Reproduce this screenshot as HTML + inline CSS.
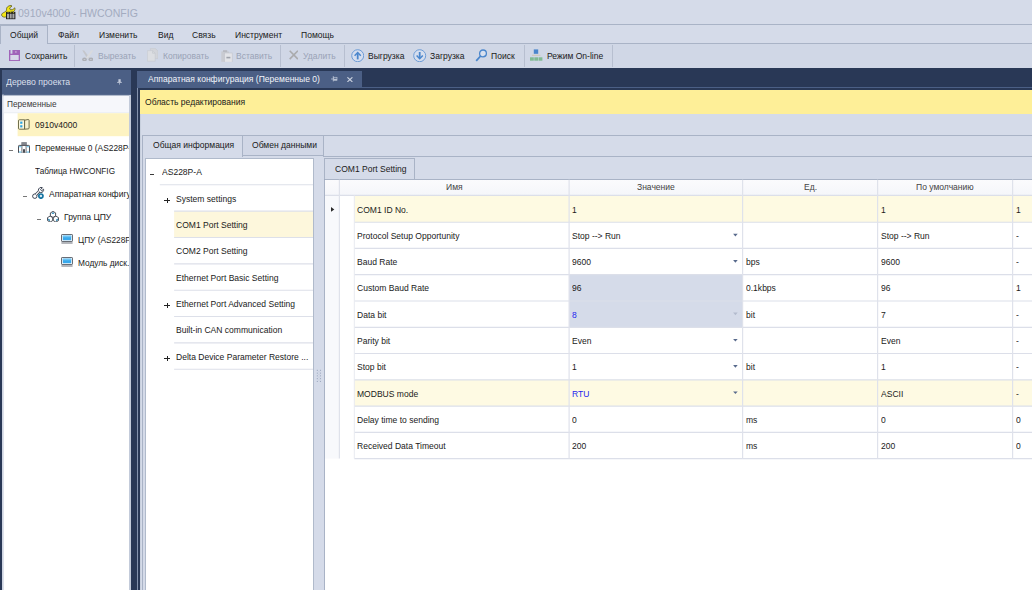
<!DOCTYPE html>
<html>
<head>
<meta charset="utf-8">
<title>0910v4000 - HWCONFIG</title>
<style>
html,body{margin:0;padding:0;}
body{width:1032px;height:590px;overflow:hidden;background:#d5dbe9;position:relative;
 font-family:"Liberation Sans",sans-serif;font-size:9.4px;color:#1a1a1a;}
div,span{box-sizing:border-box;}
.a{position:absolute;}
.t{position:absolute;white-space:nowrap;line-height:12px;height:12px;transform-origin:0 50%;transform:scaleX(.91);}
.g{color:#9aa3b6;}
.hl{position:absolute;height:1px;background:#a9b3c6;}
.vl{position:absolute;width:1px;background:#a9b3c6;}
.sep{position:absolute;width:1.2px;top:45px;height:21.5px;background:#b7bfd0;}
.tl{position:absolute;height:1px;left:174px;width:139px;background:#dfe2ea;}
.tl0{left:159.5px;width:153.5px;}
.row{position:absolute;left:354px;width:678px;height:26.3px;background:#fff;}
.gh{position:absolute;height:1px;left:354px;width:678px;background:#d4d7e1;}
.gv{position:absolute;width:1px;top:179.5px;height:279px;background:#d4d7e1;}
.dd{position:absolute;left:733px;width:0;height:0;border-left:2.4px solid transparent;border-right:2.4px solid transparent;border-top:2.7px solid #4d5f82;}
.mi{position:absolute;width:4px;height:1px;background:#3a3a3a;}
.mg{background:#777;}
.pl{position:absolute;width:6px;height:5.4px;background:linear-gradient(#222,#222) 0 2.2px/6px 1px no-repeat,linear-gradient(#222,#222) 2.5px 0/1px 5.4px no-repeat;}
</style>
</head>
<body>

<!-- ===== title bar ===== -->
<svg class="a" style="left:1px;top:5px" width="15" height="15" viewBox="0 0 15 15">
 <path d="M.6 10.2 C.2 8.6 2.2 7.6 3.6 7.2 L5.6 5.2 C5 2.6 7 .6 10 .5 L11 1 L8.6 3 L9.4 4.8 L11.8 4.6 L13.8 2.8 C14.6 5.2 12.8 7.4 10.2 7.2 L6.4 10.6 C5.4 12.6 1.4 12.8 .6 10.2 Z" fill="#f3e616" stroke="#4a4a18" stroke-width=".7"/>
 <rect x="5" y="6.8" width="9.4" height="7.4" fill="#222"/>
 <rect x="6" y="8.8" width="2" height="4.6" fill="#a8a8a8"/>
 <rect x="8.7" y="8.8" width="2" height="4.6" fill="#a8a8a8"/>
 <rect x="11.4" y="8.8" width="2" height="4.6" fill="#a8a8a8"/>
 <rect x="6.6" y="7.3" width=".9" height=".8" fill="#e8dc20"/><rect x="9.3" y="7.3" width=".9" height=".8" fill="#e8dc20"/><rect x="12" y="7.3" width=".9" height=".8" fill="#e8dc20"/>
</svg>
<div class="t" style="left:18px;top:6.5px;font-size:11.2px;color:#a3abc0;transform:scaleX(.94)">0910v4000 - HWCONFIG</div>
<div class="hl" style="left:0;top:24px;width:1032px"></div>

<!-- ===== menu tabs ===== -->
<div class="a" style="left:0;top:44px;width:1032px;height:24px;background:#d0d7e6"></div>
<div class="a" style="left:0;top:25px;width:48px;height:19px;border:1px solid #a9b3c6;border-bottom:none;background:#d0d7e6"></div>
<div class="hl" style="left:47px;top:43px;width:985px"></div>
<div class="t" style="left:10px;top:28.5px">Общий</div>
<div class="t" style="left:58px;top:28.5px">Файл</div>
<div class="t" style="left:99px;top:28.5px">Изменить</div>
<div class="t" style="left:157.5px;top:28.5px">Вид</div>
<div class="t" style="left:191.5px;top:28.5px">Связь</div>
<div class="t" style="left:235px;top:28.5px">Инструмент</div>
<div class="t" style="left:301px;top:28.5px">Помощь</div>

<!-- ===== toolbar ===== -->
<div id="toolbar">
<!-- save -->
<svg class="a" style="left:8.9px;top:49.8px" width="11" height="11.2" viewBox="0 0 11 11.2">
 <rect x=".5" y=".5" width="10" height="10.2" fill="#a064b9" stroke="#a064b9" stroke-width="1"/>
 <rect x="1.5" y="0" width="1.9" height="3.7" fill="#d0d7e6"/>
 <rect x="6.3" y="1.1" width="1.2" height="1.7" fill="#cdb4da"/>
 <rect x="1.3" y="5" width="8.4" height="5" fill="#d7d8e9"/>
</svg>
<div class="t" style="left:24.5px;top:49.5px">Сохранить</div>
<div class="sep" style="left:74px"></div>
<!-- cut -->
<svg class="a" style="left:81.8px;top:49.8px" width="11.4" height="11.4" viewBox="0 0 11.4 11.4">
 <path d="M.2 .2 L2.2 .6 L7.8 8 L5.4 8.8 Z" fill="#c4c6cb"/>
 <path d="M11.2 .2 L9.2 .6 L3.6 8 L6 8.8 Z" fill="#d9dadd"/>
 <ellipse cx="2.5" cy="9.4" rx="2.4" ry="1.8" fill="#adafb5"/>
 <ellipse cx="8.9" cy="9.4" rx="2.4" ry="1.8" fill="#adafb5"/>
 <ellipse cx="2.5" cy="9.5" rx="1" ry=".6" fill="#c9ccd4"/>
 <ellipse cx="8.9" cy="9.5" rx="1" ry=".6" fill="#c9ccd4"/>
</svg>
<div class="t g" style="left:97.5px;top:49.5px">Вырезать</div>
<!-- copy -->
<svg class="a" style="left:147px;top:48.2px" width="11.4" height="13.6" viewBox="0 0 11.4 13.6">
 <path d="M3.4 .4 H8.4 L11 3 V10.6 H3.4 Z" fill="#d3d5da" stroke="#c6c9d0" stroke-width=".6"/>
 <path d="M.4 2.6 H5.6 L8.2 5.2 V13.2 H.4 Z" fill="#dcdee2" stroke="#c6c9d0" stroke-width=".6"/>
 <path d="M5.6 2.6 V5.2 H8.2" fill="none" stroke="#c0c3ca" stroke-width=".6"/>
</svg>
<div class="t g" style="left:162.5px;top:49.5px">Копировать</div>
<!-- paste -->
<svg class="a" style="left:221.4px;top:49.6px" width="11.6" height="12.6" viewBox="0 0 11.6 12.6">
 <rect x=".3" y="1.4" width="7.6" height="10.4" fill="#c9cbd1"/>
 <rect x="2" y=".2" width="4.2" height="1.8" fill="#b8bac1"/>
 <rect x="3.6" y="3" width="7.6" height="9.2" fill="#e3e4e8" stroke="#c2c4cb" stroke-width=".6"/>
 <rect x="5.4" y="6.8" width="4" height="1.6" fill="#9fa2ab"/>
</svg>
<div class="t g" style="left:236px;top:49.5px">Вставить</div>
<div class="sep" style="left:280px"></div>
<!-- delete -->
<svg class="a" style="left:288.5px;top:49.9px" width="9.6" height="9.8" viewBox="0 0 9.6 9.8">
 <path d="M.7 .7 L8.9 9.1 M8.9 .7 L.7 9.1" stroke="#aaabad" stroke-width="1.6" fill="none"/>
</svg>
<div class="t g" style="left:303px;top:49.5px">Удалить</div>
<div class="sep" style="left:343.5px"></div>
<!-- upload -->
<svg class="a" style="left:350.6px;top:48.6px" width="13.4" height="13.4" viewBox="0 0 13.4 13.4">
 <circle cx="6.7" cy="6.7" r="6" fill="#d6deee" stroke="#6c9cd6" stroke-width="1"/>
 <path d="M6.7 10.4 V4.2" fill="none" stroke="#4a86cc" stroke-width="1.8"/>
 <path d="M3.6 6.8 L6.7 3.6 L9.8 6.8" fill="none" stroke="#4a86cc" stroke-width="1.5"/>
</svg>
<div class="t" style="left:367.5px;top:49.5px">Выгрузка</div>
<!-- download -->
<svg class="a" style="left:413.2px;top:48.6px" width="13.4" height="13.4" viewBox="0 0 13.4 13.4">
 <circle cx="6.7" cy="6.7" r="6" fill="#d6deee" stroke="#6c9cd6" stroke-width="1"/>
 <path d="M6.7 3 V9.2" fill="none" stroke="#4a86cc" stroke-width="1.8"/>
 <path d="M3.6 6.6 L6.7 9.8 L9.8 6.6" fill="none" stroke="#4a86cc" stroke-width="1.5"/>
</svg>
<div class="t" style="left:430px;top:49.5px">Загрузка</div>
<!-- search -->
<svg class="a" style="left:475px;top:48.5px" width="13" height="13" viewBox="0 0 13 13">
 <circle cx="8" cy="4.4" r="3.4" fill="#d8e0ef" stroke="#4a86cc" stroke-width="1.3"/>
 <path d="M5.6 7 L1.2 11.8" stroke="#4a86cc" stroke-width="1.8" fill="none"/>
</svg>
<div class="t" style="left:491px;top:49.5px">Поиск</div>
<div class="sep" style="left:523.5px"></div>
<!-- online -->
<svg class="a" style="left:530px;top:49px" width="12.6" height="12" viewBox="0 0 12.6 12">
 <rect x="3.8" y=".4" width="4.4" height="4.4" fill="#4a86cc"/>
 <path d="M2 6.3 H10.4" stroke="#cdbf9f" stroke-width=".7" fill="none"/>
 <rect x="0" y="8.3" width="3.8" height="3.4" fill="#7fba93"/>
 <rect x="4.3" y="8.3" width="3.8" height="3.4" fill="#7fba93"/>
 <rect x="8.6" y="8.3" width="3.8" height="3.4" fill="#7fba93"/>
</svg>
<div class="t" style="left:546.5px;top:49.5px">Режим On-line</div>
<div class="sep" style="left:611.5px"></div>
</div>

<!-- ===== dark workspace ===== -->
<div class="a" style="left:0;top:67.7px;width:1032px;height:523px;background:#293856"></div>

<!-- left panel -->
<div class="a" style="left:2px;top:70px;width:129px;height:25px;background:#4b5f85"></div>
<div class="t" style="left:6px;top:76px;color:#d9dfeb;transform:scaleX(.93)">Дерево проекта</div>
<svg class="a" style="left:117px;top:79.3px" width="5" height="5.6" viewBox="0 0 5 5.6">
 <path d="M1.4 .2 H3.7 V3 H1.4 Z" fill="#c3cbdb"/><path d="M.2 3.4 H4.8" stroke="#d5dbe7" stroke-width=".8"/><path d="M2.5 3.6 V5.6" stroke="#c3cbdb" stroke-width=".7"/>
</svg>
<div class="a" style="left:2px;top:94.6px;width:129px;height:496px;background:#bfc7d7"></div><svg class="a" style="left:0;top:0" width="140" height="590"><rect x="2.2" y="94.6" width="1.6" height="496" fill="#d3d9e5"/><rect x="2.2" y="94.9" width="128.8" height="1.3" fill="#b3bccd"/><rect x="3.7" y="96.1" width="125.5" height="495" fill="#fff"/><rect x="3.7" y="96.1" width="125.5" height="16.6" fill="#f6f7fb"/><rect x="3.7" y="112.4" width="125.5" height=".8" fill="#e6e9f0"/><rect x="17.6" y="113.2" width="111.4" height="23" fill="#fdf3c2"/></svg>
<div class="t" style="left:7px;top:98px;color:#3a3a3a;transform:scaleX(.88)">Переменные</div>
<div id="ltree">
<!-- icons -->
<svg class="a" style="left:18.2px;top:118.6px" width="11.6" height="11" viewBox="0 0 11.6 11">
 <path d="M.5 1.6 Q.5 .8 1.3 .8 H6.6 V10.2 H1.3 Q.5 10.2 .5 9.4 Z" fill="#fbf8e0" stroke="#5e5d3c" stroke-width=".9"/>
 <path d="M6.6 1.2 L10.2 .5 Q11.1 .5 11.1 1.4 V9 Q11.1 9.8 10.2 9.9 L6.6 10.2 Z" fill="#f6f1cf" stroke="#5e5d3c" stroke-width=".9"/>
 <rect x="2.2" y="2.6" width="2.2" height="2.2" fill="#2ea3e0"/>
 <rect x="2.2" y="6.2" width="2.2" height="2.2" fill="#2ea3e0"/>
</svg>
<div class="t" style="left:34.5px;top:119px">0910v4000</div>

<div class="mi mg" style="left:8.5px;top:149.5px"></div>
<svg class="a" style="left:18px;top:141.5px" width="12" height="11.8" viewBox="0 0 12 11.8">
 <rect x="3.4" y=".2" width="5.4" height="3.2" fill="#6a6d74"/>
 <path d="M3.4 1.2 H8.8 M3.4 2.3 H8.8" stroke="#aeb1b8" stroke-width=".5"/>
 <rect x=".5" y="3.4" width="11" height="7.9" rx=".8" fill="#fff" stroke="#4b4e55" stroke-width="1"/>
 <path d="M3.9 3.4 V11.3 M8.1 3.4 V11.3" stroke="#5b5e66" stroke-width=".9"/>
 <rect x="1" y="4" width="2.4" height="1.3" fill="#7ccbee"/><rect x="8.6" y="4" width="2.4" height="1.3" fill="#7ccbee"/>
 <rect x="1" y="9.4" width="2.4" height="1.3" fill="#7ccbee"/><rect x="8.6" y="9.4" width="2.4" height="1.3" fill="#7ccbee"/>
 <rect x="5" y="7.2" width="2" height="3.6" fill="#4b4e55"/>
</svg>
<div class="t" style="left:34.5px;top:142px;transform:scaleX(.895)">Переменные 0 (AS228P-A)</div>

<div class="t" style="left:34.5px;top:164.5px;transform:scaleX(.875)">Таблица HWCONFIG</div>

<div class="mi mg" style="left:22.5px;top:195.5px"></div>
<svg class="a" style="left:32.4px;top:187px" width="12.6" height="12.4" viewBox="0 0 12.6 12.4">
 <path d="M3.6 8 L7.4 4.2" stroke="#3c4454" stroke-width="3" fill="none"/>
 <circle cx="2.8" cy="9.2" r="2.2" fill="#fff" stroke="#3c4454" stroke-width="1"/>
 <path d="M6.4 3.4 A2.8 2.8 0 0 1 10.4 .7 L8.6 2.6 L9.6 3.8 L11.6 2.2 A2.8 2.8 0 0 1 8.6 5.6 Z" fill="#fff" stroke="#3c4454" stroke-width="1"/>
 <path d="M3.8 7.8 L7.4 4.2" stroke="#fff" stroke-width="1.2" fill="none"/>
 <circle cx="8.9" cy="9.1" r="2.1" fill="#d6e6ef" stroke="#1272a0" stroke-width="1.7"/>
</svg>
<div class="t" style="left:49px;top:187.5px">Аппаратная конфигурация</div>

<div class="mi mg" style="left:37px;top:218.5px"></div>
<svg class="a" style="left:46.5px;top:210.6px" width="12" height="11.6" viewBox="0 0 12 11.6">
 <path d="M3.1 5.1 L5.7 6.6 V9.6 L3.1 11.1 L.5 9.6 V6.6 Z" fill="#fff" stroke="#3a3f4a" stroke-width=".9"/>
 <path d="M8.9 5.1 L11.5 6.6 V9.6 L8.9 11.1 L6.3 9.6 V6.6 Z" fill="#fff" stroke="#3a3f4a" stroke-width=".9"/>
 <path d="M6 .4 L8.6 1.9 V4.9 L6 6.4 L3.4 4.9 V1.9 Z" fill="#fff" stroke="#3a3f4a" stroke-width=".9"/>
 <path d="M6 1.3 L7.5 2.2 L6 3.1 L4.5 2.2 Z" fill="#147cae"/>
 <path d="M1.2 7.4 L2.8 8.4 V10.2 L1.2 9.2 Z" fill="#147cae"/>
 <path d="M10.8 7.4 L9.2 8.4 V10.2 L10.8 9.2 Z" fill="#147cae"/>
</svg>
<div class="t" style="left:63.5px;top:211px">Группа ЦПУ</div>

<svg class="a" style="left:61px;top:234.3px" width="12" height="9.6" viewBox="0 0 12 9.6">
 <rect x=".5" y=".5" width="11" height="7" rx=".6" fill="#f4f8fb" stroke="#555a64" stroke-width=".9"/>
 <rect x="1.8" y="1.7" width="8.4" height="4.5" fill="#38a9ec"/>
 <rect x="1.8" y="1.7" width="8.4" height="1.6" fill="#6cc4f4"/>
 <path d="M.4 9 H11.6" stroke="#6a6e78" stroke-width="1"/>
</svg>
<div class="t" style="left:77.5px;top:234px;transform:scaleX(.885)">ЦПУ (AS228P-A)</div>

<svg class="a" style="left:61px;top:257.2px" width="12" height="9.6" viewBox="0 0 12 9.6">
 <rect x=".5" y=".5" width="11" height="7" rx=".6" fill="#f4f8fb" stroke="#555a64" stroke-width=".9"/>
 <rect x="1.8" y="1.7" width="8.4" height="4.5" fill="#38a9ec"/>
 <rect x="1.8" y="1.7" width="8.4" height="1.6" fill="#6cc4f4"/>
 <path d="M.4 9 H11.6" stroke="#6a6e78" stroke-width="1"/>
</svg>
<div class="t" style="left:77.5px;top:256.5px;transform:scaleX(.885)">Модуль диск. ввода</div>
</div>
<!-- clip of left tree text -->
<div class="a" style="left:129px;top:94.6px;width:2px;height:496px;background:#c3cbda"></div>
<div class="a" style="left:131px;top:68px;width:9px;height:522px;background:#293856"></div>
<div class="a" style="left:137.2px;top:88.2px;width:.7px;height:502px;background:#8492ad"></div>

<!-- document tab -->
<div class="a" style="left:137.2px;top:71px;width:225.3px;height:17.2px;background:#4b5f85"></div>
<div class="t" style="left:147.5px;top:73px;color:#f2f5fa">Аппаратная конфигурация (Переменные 0)</div>
<svg class="a" style="left:331px;top:76.4px" width="6.6" height="5.6" viewBox="0 0 6.6 5.6">
 <path d="M2.3 .2 V5.4" stroke="#b9c2d4" stroke-width=".9"/>
 <path d="M0 3 H2.3" stroke="#b9c2d4" stroke-width=".8"/>
 <rect x="2.7" y="1.3" width="3.3" height="2.9" fill="none" stroke="#b9c2d4" stroke-width=".7"/>
 <rect x="2.7" y="2.8" width="3.3" height="1.6" fill="#b9c2d4"/>
</svg>
<svg class="a" style="left:347.2px;top:76.8px" width="5.8" height="5.2" viewBox="0 0 5.8 5.2">
 <path d="M.4 .3 L5.4 4.9 M5.4 .3 L.4 4.9" stroke="#ccd3e0" stroke-width="1.1" fill="none"/>
</svg>
<div class="a" style="left:137.2px;top:87px;width:895px;height:1.2px;background:#4b5f85"></div>

<!-- content -->
<div class="a" style="left:139.8px;top:89.8px;width:893px;height:501px;background:#d5dbe9"></div>
<div class="a" style="left:139.8px;top:89.8px;width:893px;height:24.2px;background:#feef98"></div>
<div class="t" style="left:144.5px;top:96px">Область редактирования</div>

<!-- outer tab control -->
<div class="hl" style="left:242px;top:135px;width:790px"></div>
<div class="a" style="left:142px;top:135px;width:100.5px;height:22px;border:1px solid #a9b3c6;border-bottom:none;background:#d5dbe9"></div>
<div class="a" style="left:242.5px;top:135px;width:81px;height:21px;border:1px solid #a9b3c6;border-left:none;background:#d1d7e6"></div>
<div class="hl" style="left:323px;top:156px;width:709px"></div>
<div class="vl" style="left:141.7px;top:156px;height:434px"></div><div class="a" style="left:139.8px;top:114px;width:1.2px;height:476px;background:#c8d0de"></div>
<div class="t" style="left:152.5px;top:139px">Общая информация</div>
<div class="t" style="left:251.5px;top:139px">Обмен данными</div>

<!-- nav tree -->
<div class="a" style="left:145px;top:158.4px;width:168.8px;height:432px;background:#fff;border:.8px solid #b0bacb;border-bottom:none"></div>
<svg class="a" style="left:0;top:0" width="1032" height="590">
 <rect x="174.1" y="211.15" width="138.9" height="26.35" fill="#fdf7dc"/>
 <path d="M159.8 184.80 H313" stroke="#dde0e9" stroke-width="1.1"/>
 <path d="M174.1 211.15 H313 M174.1 237.50 H313 M174.1 263.85 H313 M174.1 290.20 H313 M174.1 316.55 H313 M174.1 342.90 H313 M174.1 369.25 H313" stroke="#dde0e9" stroke-width="1.1"/>
</svg>
<div class="mi" style="left:150.3px;top:174px"></div>
<div class="t" style="left:162px;top:165.75px">AS228P-A</div>
<div class="pl" style="left:164px;top:197.75px"></div>
<div class="t" style="left:176px;top:192.75px">System settings</div>
<div class="t" style="left:176px;top:218.75px">COM1 Port Setting</div>
<div class="t" style="left:176px;top:244.75px">COM2 Port Setting</div>
<div class="t" style="left:176px;top:271.75px">Ethernet Port Basic Setting</div>
<div class="pl" style="left:164px;top:303.10px"></div>
<div class="t" style="left:176px;top:297.75px">Ethernet Port Advanced Setting</div>
<div class="t" style="left:176px;top:323.75px">Built-in CAN communication</div>
<div class="pl" style="left:164px;top:355.90px"></div>
<div class="t" style="left:176px;top:350.75px">Delta Device Parameter Restore ...</div>

<!-- splitter -->
<svg class="a" style="left:0;top:0" width="1032" height="590">
 <rect x="316.8" y="369.8" width="1.1" height="1.1" fill="#a0abc1"/>
 <rect x="319.9" y="369.8" width="1.1" height="1.1" fill="#a0abc1"/>
 <rect x="316.8" y="372.6" width="1.1" height="1.1" fill="#a0abc1"/>
 <rect x="319.9" y="372.6" width="1.1" height="1.1" fill="#a0abc1"/>
 <rect x="316.8" y="375.3" width="1.1" height="1.1" fill="#a0abc1"/>
 <rect x="319.9" y="375.3" width="1.1" height="1.1" fill="#a0abc1"/>
 <rect x="316.8" y="378.1" width="1.1" height="1.1" fill="#a0abc1"/>
 <rect x="319.9" y="378.1" width="1.1" height="1.1" fill="#a0abc1"/>
 <rect x="316.8" y="380.9" width="1.1" height="1.1" fill="#a0abc1"/>
 <rect x="319.9" y="380.9" width="1.1" height="1.1" fill="#a0abc1"/>
 <rect x="318.4" y="371.2" width="1.1" height="1.1" fill="#c3cadb"/>
 <rect x="318.4" y="373.9" width="1.1" height="1.1" fill="#c3cadb"/>
 <rect x="318.4" y="376.6" width="1.1" height="1.1" fill="#c3cadb"/>
 <rect x="318.4" y="379.4" width="1.1" height="1.1" fill="#c3cadb"/>
</svg>

<!-- inner tab + grid -->
<div class="a" style="left:324px;top:179px;width:708px;height:411px;background:#fff;border-left:1px solid #a9b3c6;border-top:1px solid #95a1b8"></div>
<div class="a" style="left:324px;top:158.4px;width:91px;height:21px;border:1px solid #a9b3c6;border-bottom:none;background:#d5dbe9"></div>
<div class="t" style="left:334.5px;top:162.5px">COM1 Port Setting</div>

<div id="grid">
<!-- header -->
<svg class="a" style="left:0;top:0" width="1032" height="590">
 <defs><linearGradient id="hg" x1="0" y1="0" x2="0" y2="1"><stop offset="0" stop-color="#fbfbfd"/><stop offset="1" stop-color="#f5f6fa"/></linearGradient></defs>
 <rect x="325" y="179.8" width="707" height="15.6" fill="url(#hg)"/>
 <rect x="325" y="195.4" width="14.4" height="263.2" fill="#f8f9fc"/>
 <rect x="354.3" y="195.4" width="677.7" height="26.8" fill="#fefae2"/>
 <rect x="354.3" y="379.8" width="677.7" height="26.3" fill="#fefae3"/>
 <rect x="569.1" y="274.6" width="173.5" height="52.7" fill="#d5dbe9"/>
 <path d="M325 195.4 H1032 M354.3 458.6 H1032 M354.3 222.2 H1032 M354.3 248.4 H1032 M354.3 274.6 H1032 M354.3 301.0 H1032 M354.3 327.3 H1032 M354.3 353.5 H1032 M354.3 379.8 H1032 M354.3 406.1 H1032 M354.3 432.4 H1032" stroke="#dcdfe9" stroke-width="1.15" fill="none"/>
 <path d="M339.4 179.8 V458.6 M569.1 179.8 V458.6 M742.6 179.8 V458.6 M877.6 179.8 V458.6 M1012.6 179.8 V458.6" stroke="#dfe2eb" stroke-width="1.2" fill="none"/>
 <path d="M354.3 195.4 V458.6" stroke="#e8eaf1" stroke-width="1" fill="none"/>
</svg>
<!-- header text -->
<div class="t" style="left:446px;top:181px;color:#444">Имя</div>
<div class="t" style="left:637px;top:181px;color:#444">Значение</div>
<div class="t" style="left:804px;top:181px;color:#444">Ед.</div>
<div class="t" style="left:916px;top:181px;color:#444">По умолчанию</div>
<!-- indicator -->
<svg class="a" style="left:0;top:0" width="1032" height="590">
 <path d="M733.1 233.8 H737.7 L735.4 236.5 Z" fill="#586a8c"/>
 <path d="M733.1 260.0 H737.7 L735.4 262.7 Z" fill="#586a8c"/>
 <path d="M733.1 312.6 H737.7 L735.4 315.3 Z" fill="#b3bbcd"/>
 <path d="M733.1 338.9 H737.7 L735.4 341.6 Z" fill="#586a8c"/>
 <path d="M733.1 365.1 H737.7 L735.4 367.8 Z" fill="#586a8c"/>
 <path d="M733.1 391.4 H737.7 L735.4 394.1 Z" fill="#586a8c"/>
 <path d="M331 207 L334.3 209.4 L331 211.8 Z" fill="#2a2a2a"/>
</svg>
<!-- rows -->
<div class="t" style="left:357.3px;top:203.75px">COM1 ID No.</div>
<div class="t" style="left:572.3px;top:203.75px">1</div>
<div class="t" style="left:880.7px;top:203.75px">1</div>
<div class="t" style="left:1015.7px;top:203.75px">1</div>

<div class="t" style="left:357.3px;top:229.75px">Protocol Setup Opportunity</div>
<div class="t" style="left:572.3px;top:229.75px">Stop --&gt; Run</div>
<div class="t" style="left:880.7px;top:229.75px">Stop --&gt; Run</div>
<div class="t" style="left:1015.7px;top:229.75px">-</div>

<div class="t" style="left:357.3px;top:255.75px">Baud Rate</div>
<div class="t" style="left:572.3px;top:255.75px">9600</div>
<div class="t" style="left:745.8px;top:255.75px">bps</div>
<div class="t" style="left:880.7px;top:255.75px">9600</div>
<div class="t" style="left:1015.7px;top:255.75px">-</div>

<div class="t" style="left:357.3px;top:281.75px">Custom Baud Rate</div>
<div class="t" style="left:572.3px;top:281.75px">96</div>
<div class="t" style="left:745.8px;top:281.75px">0.1kbps</div>
<div class="t" style="left:880.7px;top:281.75px">96</div>
<div class="t" style="left:1015.7px;top:281.75px">1</div>

<div class="t" style="left:357.3px;top:308.75px">Data bit</div>
<div class="t" style="left:572.3px;top:308.75px;color:#1f1fee">8</div>
<div class="t" style="left:745.8px;top:308.75px">bit</div>
<div class="t" style="left:880.7px;top:308.75px">7</div>
<div class="t" style="left:1015.7px;top:308.75px">-</div>

<div class="t" style="left:357.3px;top:334.75px">Parity bit</div>
<div class="t" style="left:572.3px;top:334.75px">Even</div>
<div class="t" style="left:880.7px;top:334.75px">Even</div>
<div class="t" style="left:1015.7px;top:334.75px">-</div>

<div class="t" style="left:357.3px;top:360.75px">Stop bit</div>
<div class="t" style="left:572.3px;top:360.75px">1</div>
<div class="t" style="left:745.8px;top:360.75px">bit</div>
<div class="t" style="left:880.7px;top:360.75px">1</div>
<div class="t" style="left:1015.7px;top:360.75px">-</div>

<div class="t" style="left:357.3px;top:387.75px">MODBUS mode</div>
<div class="t" style="left:572.3px;top:387.75px;color:#1f1fee">RTU</div>
<div class="t" style="left:880.7px;top:387.75px">ASCII</div>
<div class="t" style="left:1015.7px;top:387.75px">-</div>

<div class="t" style="left:357.3px;top:413.75px">Delay time to sending</div>
<div class="t" style="left:572.3px;top:413.75px">0</div>
<div class="t" style="left:745.8px;top:413.75px">ms</div>
<div class="t" style="left:880.7px;top:413.75px">0</div>
<div class="t" style="left:1015.7px;top:413.75px">0</div>

<div class="t" style="left:357.3px;top:439.75px">Received Data Timeout</div>
<div class="t" style="left:572.3px;top:439.75px">200</div>
<div class="t" style="left:745.8px;top:439.75px">ms</div>
<div class="t" style="left:880.7px;top:439.75px">200</div>
<div class="t" style="left:1015.7px;top:439.75px">0</div>
</div>

</body>
</html>
